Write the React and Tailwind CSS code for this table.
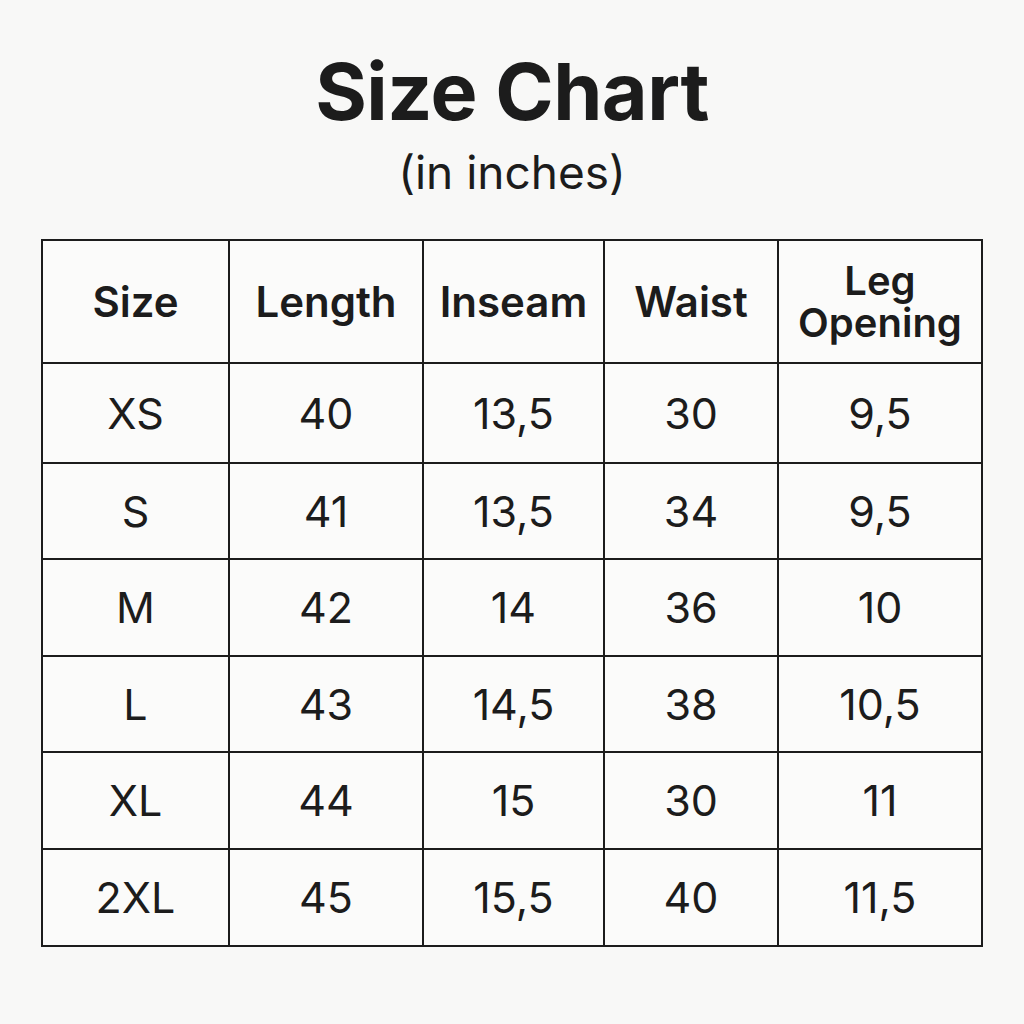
import React from 'react'

const headers = ['Size', 'Length', 'Inseam', 'Waist', 'Leg Opening']

const rows = [
    ['XS', '40', '13,5', '30', '9,5'],
    ['S', '41', '13,5', '34', '9,5'],
    ['M', '42', '14', '36', '10'],
    ['L', '43', '14,5', '38', '10,5'],
    ['XL', '44', '15', '30', '11'],
    ['2XL', '45', '15,5', '40', '11,5'],
]

const rowHeights = ['h-[100px]', 'h-[96px]', 'h-[97px]', 'h-[96px]', 'h-[97px]', 'h-[97px]']

const App = () => {
    return (
        <div className='w-[1024px] h-[1024px] bg-[#f8f8f7] text-[#1c1c1c] font-["Inter",sans-serif] flex flex-col items-center'>

            {/* title */}
            <h1 className='mt-[52px] text-[79px] font-bold leading-none tracking-[-0.5px]'>Size Chart</h1>
            <p className='mt-[18px] text-[46px] leading-none'>(in inches)</p>

            {/* table */}
            <table className='mt-[44px] border-collapse border-2 border-[#1c1c1c] bg-[#fbfbfa]'>
                <colgroup>
                    <col className='w-[187px]' />
                    <col className='w-[194px]' />
                    <col className='w-[181px]' />
                    <col className='w-[174px]' />
                    <col className='w-[204px]' />
                </colgroup>
                <thead>
                    <tr className='h-[123px]'>
                        {headers.map((h, i) => (
                            h === 'Leg Opening' ? (
                                <th key={i} className='border-2 border-[#1c1c1c] text-[40px] font-semibold leading-[42px] px-1'>
                                    <div>Leg</div>
                                    <div>Opening</div>
                                </th>
                            ) : (
                                <th key={i} className='border-2 border-[#1c1c1c] text-[42px] font-semibold leading-none px-1'>
                                    {h}
                                </th>
                            )
                        ))}
                    </tr>
                </thead>
                <tbody>
                    {rows.map((r, i) => (
                        <tr key={i} className={rowHeights[i]}>
                            {r.map((c, j) => (
                                <td key={j} className='border-2 border-[#1c1c1c] text-center text-[43px] leading-none font-normal'>
                                    {c}
                                </td>
                            ))}
                        </tr>
                    ))}
                </tbody>
            </table>

        </div>
    )
}

export default App
